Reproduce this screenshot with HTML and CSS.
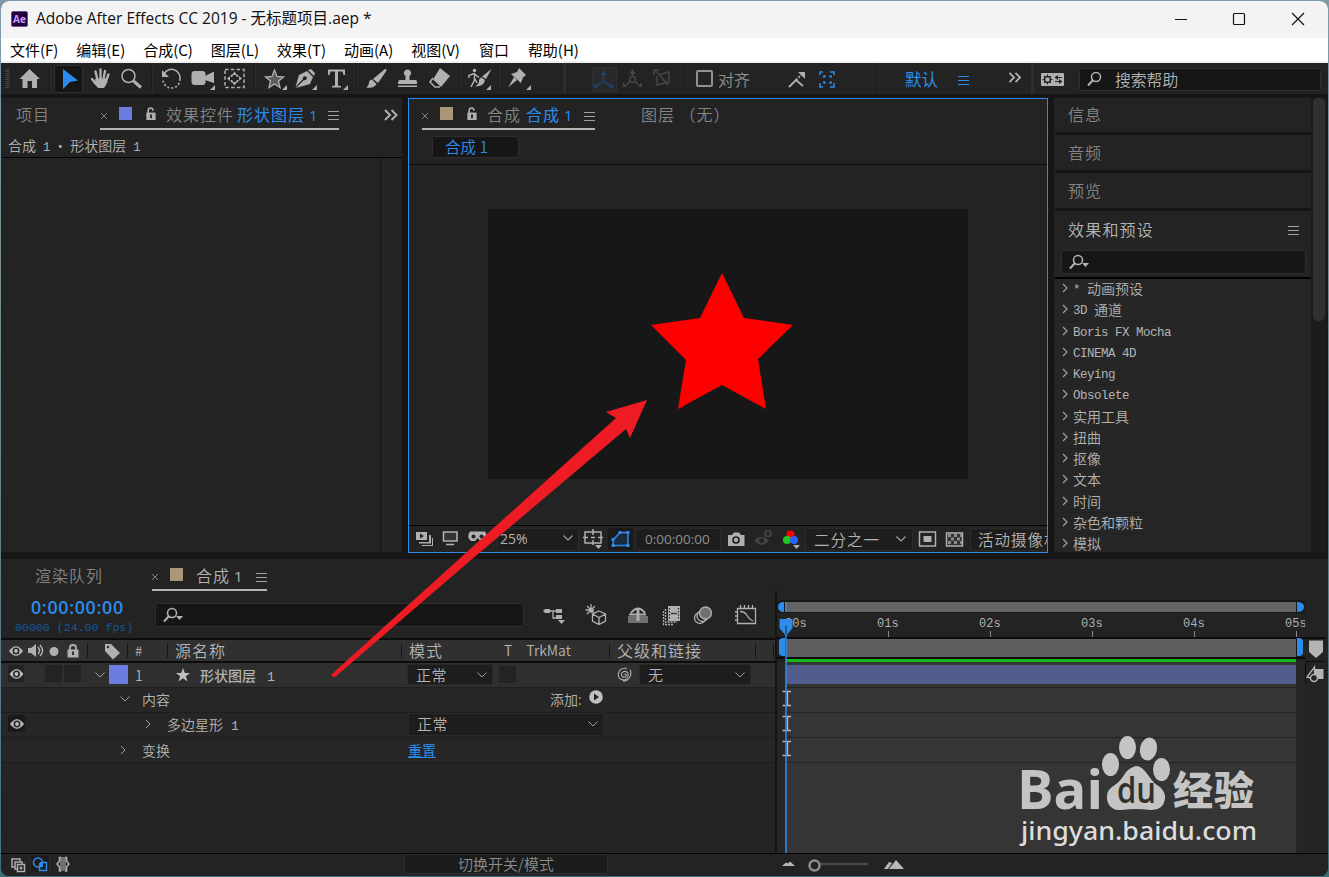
FILE: index.html
```html
<!DOCTYPE html>
<html lang="zh-CN">
<head>
  <meta charset="UTF-8" />
  <title>Adobe After Effects CC 2019</title>
  <link rel="stylesheet" href="styles.css">
</head>
<body>
  <svg class="defs">
    <symbol id="down" viewBox="0 0 12 8"><path d="M1.5 1.5 6 6 10.500 1.500" /></symbol>
    <symbol id="right" viewBox="0 0 8 10"><path d="M2 1 6 5 2 9" /></symbol>
    <symbol id="menu" viewBox="0 0 11 11"><path d="M0 1.500H11M0 5.500H11M0 9.500H11" /></symbol>
    <symbol id="close" viewBox="0 0 8 8"><path d="M1 1 7 7M7 1 1 7" /></symbol>
    <symbol id="more" viewBox="0 0 14 12"><path d="M1 1 6 6 1 11M7.500 1 12.500 6 7.500 11" /></symbol>
    <symbol id="unlock" viewBox="0 0 12 14"><path d="M3 7V3.500Q3 1 5.500 1 8 1 8 3.500V4" fill="none" stroke="#b0b0b0" stroke-width="1.700" /><rect x="1" y="6" width="10" height="8" fill="#b0b0b0" /><path d="M6 8v4" stroke="#232323" stroke-width="2" /></symbol>
    <symbol id="search" viewBox="0 0 22 16"><circle cx="9" cy="6" r="4.500" fill="none" stroke="#b4b4b4" stroke-width="1.500" /><path d="M6 9 1 14.500" stroke="#b4b4b4" stroke-width="2" /></symbol>
    <symbol id="eye" viewBox="0 0 14 10"><path d="M0 5Q7-4.500 14 5 7 14.500 0 5Z" fill="#bebebe" /><circle cx="7" cy="5" r="3.500" fill="#262626" /><circle cx="7" cy="5" r="1.900" fill="#bebebe" /></symbol>
    <symbol id="tri" viewBox="0 0 7 4"><path d="M0 0H7L3.500 4Z" fill="#b4b4b4" /></symbol>
  </svg>

  <div class="window">
    <!-- Title bar -->
    <div class="titlebar">
      <div class="app-icon">Ae</div>
      <div class="title">Adobe After Effects CC 2019 - <span class="zh">无标题项目</span>.aep *</div>
      <svg class="winbtns" width="150" height="37" viewBox="1170 1 150 37" fill="none" stroke="#111" stroke-width="1.200">
        <path d="M1175 19.500H1187" />
        <rect x="1233.500" y="13.500" width="11" height="11" rx="1" />
        <path d="M1292 13 1304 25M1304 13 1292 25" />
      </svg>
    </div>

    <div class="menubar">
      <span>文件(F)</span><span>编辑(E)</span><span>合成(C)</span><span>图层(L)</span><span>效果(T)</span><span>动画(A)</span><span>视图(V)</span><span>窗口</span><span>帮助(H)</span>
    </div>

    <!-- Tools -->
    <div class="toolbar">
      <svg viewBox="1 63 13 31"><path d="M7.500 69V89" stroke="#4a4a4a" stroke-width="4" stroke-dasharray="1 1" /></svg>
      <svg viewBox="14 63 31 31"><path fill="#b0b0b0" d="M29.500 69 40 79H37V88H32V81H27.500V88H22.500V79H19.500Z" /></svg>
      <i class="sep"></i>
      <svg viewBox="54 63 31 31"><rect x="54.500" y="65.500" width="28" height="27" rx="2" fill="#161616" stroke="#2f2f2f" /><path d="M63 69 78 80.500 70 82 63 89Z" fill="#2d8ceb" /></svg>
      <svg viewBox="85 63 31 31" fill="none" stroke="#b0b0b0" stroke-linecap="round"><path stroke-width="2.400" d="M97.500 80 95.500 71.500M100.500 79V69.500M103.500 79 105 71M106 81 108.500 74.500M96 84 92 79" /><path stroke-width="1" fill="#b0b0b0" d="M96 79H106L107 82 104 87.500H98L94.500 83Z" /></svg>
      <svg viewBox="116 63 31 31" fill="none" stroke="#b0b0b0"><circle cx="128.500" cy="76" r="6.500" stroke-width="1.500" /><path stroke-width="3" d="M133.500 81 141 87.500" /></svg>
      <i class="sep"></i>
      <svg viewBox="156 63 31 31" fill="none" stroke="#b0b0b0"><path stroke-width="1.500" d="M164 74A8.500 8.500 0 0 1 180 79" /><path stroke-width="1.600" stroke-dasharray="2 2" d="M180 79A8.500 8.500 0 0 1 163 80" /><path d="M162 70V77H169Z" fill="#b0b0b0" stroke="none" /></svg>
      <svg viewBox="187 63 31 31" fill="#b0b0b0"><rect x="191.500" y="71" width="14" height="14" rx="3" /><path d="M205 76 214 71.500V83L205 80ZM215 85V90H210Z" /></svg>
      <svg viewBox="218 63 32 31" fill="none" stroke="#b0b0b0" stroke-width="1.500"><rect x="225" y="69.500" width="19" height="18" stroke-dasharray="3.500 2.300" /><path fill="#b0b0b0" stroke="none" d="M234.500 71.500 237 75H232ZM234.500 85.500 237 82H232ZM227 78.500 230 76V81ZM242 78.500 239 76V81Z" /><path d="M231.500 77V75.500H233M236 75.500H237.500V77M237.500 80V81.500H236M233 81.500H231.500V80" /></svg>
      <i class="sep"></i>
      <svg viewBox="259 63 31 31"><path d="M274.500 70 277 76.500 283.500 77 278.500 81 280 87.500 274.500 84 269 87.500 270.500 81 265.500 77 272 76.500Z" fill="#5d5d5d" stroke="#b0b0b0" stroke-width="1.300" /><path fill="#b0b0b0" d="M287 85V90H282Z" /></svg>
      <svg viewBox="290 63 31 31" fill="#b0b0b0"><path d="M308 70 311 69 315 73 314 76ZM307 71 313 77 310 84 296 88 304 80A2 2 0 1 0 303 79L295.500 87 299 75ZM317 85V90H312Z" /></svg>
      <svg viewBox="321 63 31 31" fill="#b0b0b0"><path d="M328 69.500H345V75H343.500L342.500 71.500H338V85.500L341 86V87.500H332V86L335 85.500V71.500H330.500L329.500 75H328ZM348 85V90H343Z" /></svg>
      <i class="sep"></i>
      <svg viewBox="361 63 31 31" fill="#b0b0b0"><path d="M385 69Q388 69 385 73L378 83 373 79ZM372 79.500 376.500 84Q373 89 366.500 87.500 369 85 369 83 369 80 372 79.500Z" /></svg>
      <svg viewBox="392 63 31 31" fill="#b0b0b0"><path d="M405.500 76A3.600 3.600 0 1 1 409.500 76V80H416Q417 80 417 84H398Q398 80 400 80H405.500ZM398 85.500H417V87H398Z" /></svg>
      <svg viewBox="423 63 32 31"><path d="M440 68 450 76 441 87 433 79.500Z" fill="#b0b0b0" /><path d="M433 78 430 82 435 87H440" fill="none" stroke="#b0b0b0" stroke-width="1.500" /></svg>
      <i class="sep"></i>
      <svg viewBox="464 63 31 31" fill="none" stroke="#b0b0b0" stroke-width="1.500"><circle cx="474.500" cy="70.500" r="1.800" fill="#b0b0b0" stroke="none" /><path d="M469 78V75.500L474 73.500 479 77.500M474.500 73V80L471 87M475 79 477 83" /><path d="M491.500 69 486 79 482 76.500ZM481.500 77.500 485 80Q484 86.500 475 86.500 479 84 479 81T481.500 77.500ZM491 85V90H486Z" fill="#b0b0b0" stroke="none" /></svg>
      <i class="sep"></i>
      <svg viewBox="502 63 32 31" fill="#b0b0b0"><path d="M519 68 526 75 523 77.500 521 83 511 74 517 72ZM514 77 517 80 508.500 87ZM531 85V90H526Z" /></svg>
      <i class="sep thick"></i>
      <svg viewBox="592 63 26 31"><rect x="592.500" y="67.500" width="24" height="24" fill="#292929" stroke="#303030" /><path stroke="#1f4268" fill="none" stroke-width="1.600" d="M603.500 73V81L596 86M603.500 81 611 86" /><path fill="#1f4268" d="M603.500 70 606.500 75H600.500ZM594 88V83L598 88ZM613 88V83L609 88Z" /></svg>
      <svg viewBox="618 63 30 31" fill="none" stroke="#464646" stroke-width="1.500"><circle cx="632.500" cy="79.500" r="3" /><path d="M632.500 76V72M630 81.500 626 85M635 81.500 639 85" /><path stroke="none" fill="#464646" d="M632.500 69 635.500 74H629.500ZM623 87V82L627 87ZM642 87V82L638 87Z" /></svg>
      <svg viewBox="648 63 29 31" fill="none" stroke="#464646" stroke-width="1.500"><path d="M657 76V85L669 82V72L660 74.500M655 70 668 85M654 75V70H659" /></svg>
      <i class="sep"></i>
      <div class="snap"><span class="checkbox"></span>对齐</div>
      <svg viewBox="781 63 31 31" fill="none" stroke="#b0b0b0" stroke-width="1.800"><path d="M789 87 796 80 803 86" /><path stroke-dasharray="2 1.500" d="M796 80 802 74" /><path fill="#b0b0b0" stroke="none" d="M798 72H805V79Z" /></svg>
      <svg viewBox="812 63 30 31" fill="none" stroke="#2d8ceb" stroke-width="1.500"><path d="M820 75V72H823M830 72H834V75M834 83V87H830M823 87H820V83M824 78V76H826M829 76H831V78M831 81V83H829M826 83H824V81" /></svg>
      <i class="sep late"></i>
      <div class="workspace">默认</div>
      <svg class="ws-menu"><use href="#menu" /></svg>
      <svg class="ws-more"><use href="#more" /></svg>
      <i class="sep thick"></i>
      <svg viewBox="1038 63 29 31"><rect x="1041" y="73" width="23" height="13" rx="1" fill="#b0b0b0" /><circle cx="1047.500" cy="79.500" r="3" fill="none" stroke="#232323" stroke-width="1.500" /><path d="M1047.500 74.500V84.500M1042.500 79.500H1052.500M1044 76 1051 83M1051 76 1044 83" stroke="#232323" /><circle cx="1047.500" cy="79.500" r="2" fill="#b0b0b0" /><path d="M1055 77.500H1062M1055 81.500H1062" stroke="#232323" /><path d="M1058 75V80L1054.500 77.500ZM1059 79V84L1062.500 81.500Z" fill="#232323" /></svg>
      <div class="help-search"><svg class="ico-search"><use href="#search" /></svg>搜索帮助</div>
    </div>

    <div class="upper">
      <!-- Effect controls -->
      <div class="panel controls">
        <div class="tabs">
          <div class="tab idle">项目</div>
          <div class="tab active">
            <svg class="x"><use href="#close" /></svg>
            <span class="swatch layer"></span>
            <svg class="lock"><use href="#unlock" /></svg>
            <span class="label">效果控件</span><span class="label blue">形状图层<b>1</b></span>
            <svg class="menu"><use href="#menu" /></svg>
          </div>
          <svg class="more"><use href="#more" /></svg>
        </div>
        <div class="crumb">合成<i>1</i><span class="dot">・</span>形状图层<i>1</i></div>
        <div class="controls-body"></div>
      </div>

      <!-- Composition viewer -->
      <div class="panel viewer">
        <div class="tabs">
          <div class="tab active">
            <svg class="x"><use href="#close" /></svg>
            <span class="swatch comp"></span>
            <svg class="lock"><use href="#unlock" /></svg>
            <span class="label">合成</span><span class="label blue">合成<b>1</b></span>
            <svg class="menu"><use href="#menu" /></svg>
          </div>
          <div class="tab layer-tab">图层 （无）</div>
        </div>
        <div class="flow"><span class="chip">合成 1</span></div>
        <div class="stage">
          <svg class="canvas" width="480" height="270" viewBox="488 209 480 270">
            <path d="M722 273 744 318 793 325 758 359 766 409 722 385 678 409 686 360 651 325 700 318Z" fill="#f00" />
          </svg>
        </div>
        <div class="viewer-bar">
          <svg width="88" height="26" viewBox="409 526 88 26">
            <g fill="#b0b0b0"><path d="M416 532H427V540H416Z" /><path d="M429 535V542H419V543.500H431V535ZM432 538V545H422V546H433V538Z" /></g>
            <path d="M420 533.500 424 536 420 538.500Z" fill="#232323" />
            <path d="M443.500 532H457V541H443.500ZM446 544.500H454" fill="#333" stroke="#b0b0b0" stroke-width="1.600" />
            <path d="M470 531.500H485Q488 536 485 541H480.500L477.500 538 475 541H471Q466 537 470 531.500Z" fill="#b0b0b0" />
            <circle cx="473.500" cy="536.500" r="2" fill="#232323" /><circle cx="481.500" cy="536.500" r="2" fill="#232323" />
          </svg>
          <div class="drop zoom">25%<svg class="dn"><use href="#down" /></svg></div>
          <svg width="28" height="26" viewBox="579 526 28 26" fill="none" stroke="#b0b0b0" stroke-width="1.500"><rect x="585" y="532" width="16" height="11" /><path d="M593 529V535M593 540V545M583 537.500H588M598 537.500H603M591 537.500H595" /><path d="M595 545H602L598.500 549Z" fill="#b0b0b0" stroke="none" /></svg>
          <svg width="28" height="26" viewBox="607 526 28 26"><rect x="608" y="528" width="25" height="22" rx="2" fill="#1a1a1a" /><path d="M613 545.500V540L620 532.500H628V545.500Z" stroke="#2d8ceb" stroke-width="1.500" fill="#1c2c3c" /><path d="M611.500 544h3v3h-3zM611.500 538h3v3h-3zM618.500 531h3v3h-3zM626.500 531h3v3h-3zM626.500 544h3v3h-3z" fill="#2d8ceb" /></svg>
          <div class="drop time">0:00:00:00</div>
          <svg width="83" height="26" viewBox="722 526 83 26">
            <path d="M728 535H732L734 532.500H739L741 535H744.500V546H728Z" fill="#b0b0b0" /><circle cx="736" cy="540" r="3" fill="none" stroke="#232323" stroke-width="1.700" />
            <path d="M754.500 540.500Q761.500 533 769 540.500 761.500 549 754.500 540.500Z" fill="#454545" /><circle cx="761.500" cy="540.500" r="2.500" fill="#232323" /><circle cx="768" cy="533.500" r="3" fill="none" stroke="#454545" stroke-width="1.700" />
            <circle cx="790.500" cy="534.500" r="4" fill="#f00" /><circle cx="787" cy="540" r="4" fill="#1ec81e" /><circle cx="794" cy="540" r="4" fill="#2a62ff" /><path d="M793 545H800L796.500 549Z" fill="#b0b0b0" />
          </svg>
          <div class="drop res">二分之一<svg class="dn"><use href="#down" /></svg></div>
          <svg width="57" height="26" viewBox="913 526 57 26">
            <rect x="919.500" y="532" width="16" height="14" fill="none" stroke="#b0b0b0" stroke-width="1.500" /><rect x="923.500" y="536" width="8" height="6" fill="#b0b0b0" />
            <rect x="946.500" y="533" width="16" height="13" fill="#333" stroke="#b0b0b0" stroke-width="1.500" /><path d="M948 535.500H962M951 539H962M948 542.500H962" stroke="#8c8c8c" stroke-width="3" stroke-dasharray="3 3" />
          </svg>
          <div class="drop cam">活动摄像机</div>
        </div>
      </div>

      <!-- Right stack -->
      <div class="panel stack">
        <div class="stack-main">
          <div class="closed">信息</div>
          <div class="closed">音频</div>
          <div class="closed">预览</div>
          <div class="presets-head">效果和预设<svg class="menu"><use href="#menu" /></svg></div>
          <div class="presets-search"><svg class="ico-search"><use href="#search" /></svg><svg class="tri"><use href="#tri" /></svg></div>
          <ul class="presets">
            <li><svg><use href="#right" /></svg><span>* </span>动画预设</li>
            <li><svg><use href="#right" /></svg><span>3D </span>通道</li>
            <li><svg><use href="#right" /></svg><span>Boris FX Mocha</span></li>
            <li><svg><use href="#right" /></svg><span>CINEMA 4D</span></li>
            <li><svg><use href="#right" /></svg><span>Keying</span></li>
            <li><svg><use href="#right" /></svg><span>Obsolete</span></li>
            <li><svg><use href="#right" /></svg>实用工具</li>
            <li><svg><use href="#right" /></svg>扭曲</li>
            <li><svg><use href="#right" /></svg>抠像</li>
            <li><svg><use href="#right" /></svg>文本</li>
            <li><svg><use href="#right" /></svg>时间</li>
            <li><svg><use href="#right" /></svg>杂色和颗粒</li>
            <li><svg><use href="#right" /></svg>模拟</li>
          </ul>
        </div>
        <div class="scroll"><div class="thumb"></div></div>
      </div>
    </div>

    <!-- Timeline -->
    <div class="timeline">
      <div class="tabs">
        <div class="tab queue">渲染队列</div>
        <div class="tab active">
          <svg class="x"><use href="#close" /></svg>
          <span class="swatch comp"></span>
          <span class="label">合成<b>1</b></span>
          <svg class="menu"><use href="#menu" /></svg>
        </div>
      </div>

      <div class="tl-body">
        <div class="layers">
          <div class="tl-tools">
            <div class="clock">
              <div class="timecode">0:00:00:00</div>
              <div class="fps">00000 (24.00 fps)</div>
            </div>
            <div class="tl-search"><svg class="ico-search"><use href="#search" /></svg><svg class="tri"><use href="#tri" /></svg></div>
            <svg width="240" height="47" viewBox="530 591 240 47" fill="none" stroke="#b0b0b0" stroke-width="1.300">
              <path d="M546 611H562M553 611V618H559" /><path fill="#b0b0b0" stroke="none" d="M543 611 545 609H550V613H545ZM556 609h6v4h-6zM556 615h6v4h-6zM558 620h7l-3.500 4z" />
              <path d="M599 611 605.500 614V621L599 624.500 592.500 621V614ZM592.500 614 599 617.500 605.500 614M599 617.500V625M591 604V613M585.500 610H594M587 606 594 613M595 606 587 614" /><circle cx="591" cy="610" r="2.200" fill="#b0b0b0" stroke="none" />
              <path fill="#707070" stroke="none" d="M628 616h20v7h-20z" /><path d="M629 614.500H646M631 613Q638 604 645 613" stroke-width="2" /><path d="M638 609V621" stroke-width="3" />
              <path d="M663.500 611V624.500H674M665.500 609V622H677" stroke-dasharray="2 1" /><rect x="668" y="606" width="12" height="15" fill="#b0b0b0" stroke="none" /><path d="M669.500 608V620M678.500 608V620" stroke="#333" stroke-dasharray="1.500 1.500" /><path stroke="#333" d="M671 613.500H677" />
              <circle cx="700" cy="618" r="5.500" /><circle cx="702.500" cy="616" r="5.500" /><circle cx="705.500" cy="613" r="6" fill="#707070" />
              <path d="M737.500 608.500H755.500V623.500H737.500ZM740 611.500Q745 611.500 747 615.500T753 621M740.500 608V605M744.500 608V605M748.500 608V605M752.500 608V605M737 612H735M737 616H735M737 620H735" />
            </svg>
          </div>
          <div class="cols">
            <svg width="127" height="22" viewBox="1 640 127 22"><use href="#eye" x="9" y="646" width="14" height="10" /><path d="M28 648H31L36 644V657L31 653H28Z" fill="#b0b0b0" /><path d="M38 647Q41 651 38 654M40 645Q45 651 40 656" stroke="#b0b0b0" stroke-width="1.400" fill="none" /><circle cx="54" cy="651.500" r="4.500" fill="#b0b0b0" /><path d="M70 651V647.500Q70 645 73 645T76 647.500V651" stroke="#b0b0b0" stroke-width="1.800" fill="none" /><rect x="67.500" y="649.500" width="11" height="8" fill="#b0b0b0" /><path d="M73 651.500V655" stroke="#333" stroke-width="2" /><path d="M105 644H111L120 653 113 659.500 105 651Z" fill="#b0b0b0" /><circle cx="108" cy="647" r="1.300" fill="#333" /><path d="M87.500 644V658M127.500 644V658" stroke="#151515" /></svg>
            <div class="c-num">#</div>
            <div class="c-name">源名称</div>
            <div class="c-mode">模式<span class="c-t">T</span><span>TrkMat</span></div>
            <div class="c-parent">父级和链接</div>
            <div class="c-end"></div>
          </div>
          <div class="row selected">
            <svg class="switches" viewBox="1 663 86 24"><path fill="#232323" d="M8 665h16v17H8zM45 665h17v17H45zM64 665h17v17H64z" /><use href="#eye" x="9.500" y="669" width="14" height="10" /></svg>
            <svg class="dn twirl"><use href="#down" /></svg>
            <span class="color"></span>
            <span class="index">1</span>
            <svg class="star" viewBox="0 0 14 14"><path d="M7 0 8.800 5H14L9.800 8.200 11.500 13.500 7 10.300 2.500 13.500 4.200 8.200 0 5H5.200Z" fill="#c0c0c0" /></svg>
            <div class="name">形状图层<i>1</i></div>
            <div class="select mode">正常<svg class="dn"><use href="#down" /></svg></div>
            <span class="slot"></span>
            <svg class="whip" viewBox="0 0 16 16"><path d="M8.500 8Q10.500 6.500 10.500 9 9.500 11.500 6.500 10.500 4.500 8.500 6 6 9 3.500 12 6 13.500 10 10.500 13 6 15 2.800 11.500 .5 7 4 3 7 .8 11 1.500M14.500 3Q16.500 8 13.500 12 11 15.500 7 15" fill="none" stroke="#b0b0b0" stroke-width="1.200" /></svg>
            <div class="select parent">无<svg class="dn"><use href="#down" /></svg></div>
          </div>
          <div class="row content">
            <svg class="dn"><use href="#down" /></svg>
            <div class="prop">内容</div>
            <div class="add">添加:</div>
            <svg class="play" viewBox="0 0 14 14"><circle cx="7" cy="7" r="6.800" fill="#c0c0c0" /><path d="M5 3.500 10 7 5 10.500Z" fill="#232323" /></svg>
          </div>
          <div class="row shape">
            <svg class="switches" viewBox="1 713 86 24"><path fill="#1a1a1a" d="M8 716h17v17H8z" /><use href="#eye" x="10" y="720" width="14" height="10" /></svg>
            <svg class="rt"><use href="#right" /></svg>
            <div class="prop">多边星形<i>1</i></div>
            <div class="select blend">正常<svg class="dn"><use href="#down" /></svg></div>
          </div>
          <div class="row transform">
            <svg class="rt"><use href="#right" /></svg>
            <div class="prop">变换</div>
            <a class="reset">重置</a>
          </div>
        </div>

        <div class="tracks">
          <svg class="ruler" width="528" height="71" viewBox="777 591 528 71">
            <path d="M777 613V606Q777 600 783 600H1299Q1305 600 1305 606V613Z" fill="#191919" />
            <rect x="786" y="602" width="510" height="10" fill="#646464" />
            <path d="M784 602Q778 602 778 607T784 612ZM1297 602Q1304 602 1304 607T1297 612ZM785 602h1.500v10h-1.500z" fill="#2d8ceb" />
            <path d="M888.500 631V638M990.500 631V638M1092.500 631V638M1194.500 631V638M1296.500 631V638" stroke="#8a8a8a" />
            <g class="secs"><text x="785">00s</text><text x="877">01s</text><text x="979">02s</text><text x="1081">03s</text><text x="1183">04s</text><text x="1285">05s</text></g>
            <path d="M777 637H1305V639H777Z" fill="#0c0c0c" />
            <rect x="779" y="639" width="524" height="18" fill="#191919" />
            <rect x="786" y="639" width="510" height="18" fill="#5f5f5f" />
            <path d="M785 638H783Q779 638 779 642V653Q779 656 783 656H785ZM1297 638H1299Q1303 638 1303 642V653Q1303 656 1299 656H1297Z" fill="#2d8ceb" />
            <path d="M777 657H1305V659H777Z" fill="#0c0c0c" />
            <rect x="786" y="659" width="510" height="3" fill="#10b81c" />
          </svg>
          <div class="track top"><div class="bar"></div></div>
          <div class="track"></div>
          <div class="track"></div>
          <div class="track"></div>
          <div class="track rest"></div>
          <svg class="playhead" width="24" height="262" viewBox="775 591 24 262">
            <path d="M779.500 619H792.500V628L786 636 779.500 628Z" fill="#2d8ceb" /><path d="M786 626V637" stroke="#1a3c60" stroke-width="1.300" />
            <path d="M782.500 691.500H791M782.500 705.500H791M782.500 716.500H791M782.500 730.500H791M782.500 741.500H791M782.500 755.500H791M787.500 692V705M787.500 717V730M787.500 742V755" stroke="#b8b8b8" stroke-width="1.300" />
            <path d="M786 634V853" stroke="#2d8ceb" stroke-width="1.500" />
          </svg>
        </div>

        <svg class="side" width="23" height="262" viewBox="1305 591 23 262">
          <path d="M1305 637H1326V639H1305ZM1305 661H1326V662H1305ZM1305 663h1v21h-1z" fill="#0c0c0c" />
          <path d="M1309 640.500H1323V652L1316 658 1309 652Z" fill="#b4b4b4" />
          <path d="M1312 669h11.500v10h-11.500z" fill="#b4b4b4" /><path d="M1307 677 1314.500 667V679Z" fill="#232323" stroke="#b4b4b4" stroke-width="1.300" /><circle cx="1314" cy="678" r="3.500" fill="#232323" stroke="#b4b4b4" stroke-width="1.500" />
        </svg>
      </div>

      <div class="tl-foot">
        <svg width="80" height="22" viewBox="1 854 80 22" fill="none" stroke="#b0b0b0" stroke-width="1.500">
          <rect x="30.500" y="855" width="19" height="18" rx="1" fill="#1c1c1c" stroke="#2c2c2c" stroke-width="1" />
          <path d="M14 867H12V859H20V861M17 869H15V862H22V864" /><rect x="17.500" y="864.500" width="7" height="7" /><path d="M21 866.500V869.500M19.500 868H22.500" />
          <circle cx="38" cy="862.500" r="4.500" stroke="#2d8ceb" /><path d="M40 862.500H46.500V870.500H39.500V866" stroke="#2d8ceb" /><path d="M39 863h4v4h-4z" fill="#2d8ceb" stroke="none" />
          <path d="M60 857H66V871H60Z" fill="#707070" stroke="none" /><path d="M61 857.500H59.500V861L57 864 59.500 867V871H61M65 857.500H66.500V861L69 864 66.500 867V871H65" />
        </svg>
        <div class="toggle">切换开关/模式</div>
        <svg class="zoomer" width="130" height="22" viewBox="780 854 130 22"><path d="M783 866 787 862.500 789 863.500 791 861.500 796 866ZM885 869 890 862 893 863 889 869ZM890 869 897 860 905 869Z" fill="#b8b8b8" /><path d="M820 864H869" stroke="#484848" stroke-width="2.500" /><circle cx="815.500" cy="865.500" r="5" fill="#232323" stroke="#8c8c8c" stroke-width="2.500" /></svg>
      </div>
    </div>
  </div>

  <!-- Annotation arrow and watermark lie over the window -->
  <svg class="overlay" width="1329" height="877" viewBox="0 0 1329 877">
    <path d="M647 400 606 412 616 418 458 560 332 674Q331 677 335 677L471 560 626 429 630 438Z" fill="#ed1c24" />
    <g fill="#c4c4c4">
      <ellipse cx="1110.500" cy="764.500" rx="8.500" ry="11.500" />
      <ellipse cx="1127.500" cy="747.500" rx="8.500" ry="11.500" />
      <ellipse cx="1148.500" cy="749" rx="8.500" ry="11.500" transform="rotate(12 1148.500 749)" />
      <ellipse cx="1161.500" cy="769.500" rx="8.500" ry="11.500" />
      <path d="M1136 766Q1142 766 1148 775T1160 787Q1166 793 1165 799 1163 811 1150 810 1136 808 1122 810 1109 811 1107 799 1106 791 1112 787 1120 782 1124 775T1136 766Z" />
      <text class="wm-bai" x="1017" y="809" textLength="86" lengthAdjust="spacingAndGlyphs">Bai</text>
      <text class="wm-du" x="1117" y="803" textLength="39" lengthAdjust="spacingAndGlyphs">du</text>
      <text class="wm-jy" x="1173" y="805" textLength="81">经验</text>
      <text class="wm-url" x="1021" y="840" textLength="236" lengthAdjust="spacingAndGlyphs">jingyan.baidu.com</text>
    </g>
  </svg>
</body>
</html>
```

FILE: styles.css
```css
* {
  box-sizing: border-box;
}

body {
  margin: 0;
  padding: 1px;
  width: 1329px;
  height: 877px;
  overflow: hidden;
  background: linear-gradient(#7c9cab, #7c8e94 30%, #44747c 97%, #3a7078);
  font-family: "Noto Sans CJK SC", sans-serif;
  font-weight: 350;
  color: #b4b4b4;
}

svg {
  display: block;
  flex: none;
}

i {
  font-style: normal;
}

.defs {
  display: none;
}

.window {
  width: 1327px;
  height: 875px;
  border-radius: 8px;
  overflow: hidden;
  background: #161616;
}

/* Title + menu */
.titlebar {
  display: flex;
  align-items: center;
  height: 37px;
  padding-left: 10px;
  background: #f3f3f3;
  color: #111;
}

.app-icon {
  width: 17px;
  height: 16px;
  margin-bottom: 2px;
  border: 1px solid #6f4f9c;
  border-radius: 2px;
  background: #22003c;
  color: #c59cff;
  font: bold 10px/14px "Open Sans", sans-serif;
  text-align: center;
}

.title {
  margin: 0 auto 4px 8px;
  font: 15.5px "Open Sans", sans-serif;
}

.title .zh {
  font-family: "Noto Sans CJK SC", sans-serif;
  font-size: 15.5px;
}

.winbtns {
  margin-right: 8px;
}

.menubar {
  display: flex;
  gap: 18px;
  height: 25px;
  padding-left: 9px;
  border-bottom: 2px solid #f0f0f0;
  background: #fff;
  color: #000;
  font-size: 15px;
  font-weight: 400;
  line-height: 23px;
  letter-spacing: -0.02px;
}

.menubar span:nth-child(n+8) {
  padding-left: 1px;
}

/* Toolbar */
.toolbar {
  display: grid;
  grid-template-columns:
    13px 31px 9px 31px 31px 31px 9px 31px 31px 32px 9px 31px 31px 31px
    9px 31px 31px 32px 9px 31px 7px 32px 58px 26px 30px 29px 18px 86px
    31px 30px 63px 43px 30px 46px 14px 29px 242px;
  align-items: center;
  height: 31px;
  background: #232323;
}

.toolbar > svg {
  width: 100%;
  height: 31px;
}

.sep {
  width: 2px;
  height: 26px;
  justify-self: center;
  background: #1b1b1b;
  border-right: 1px solid #2d2d2d;
}

.sep.thick {
  width: 3px;
  height: 31px;
  margin-left: 3px;
  background: #2e2e2e;
}

.sep.late {
  height: 31px;
  margin-left: 8px;
}

.snap {
  display: flex;
  align-items: center;
  gap: 5px;
  padding-left: 1px;
  font-size: 16px;
  line-height: 30px;
  color: #909090;
}

.checkbox {
  width: 17px;
  height: 17px;
  border: 2px solid #909090;
  border-radius: 2px;
}

.workspace {
  color: #2d8ceb;
  font-size: 16.5px;
  font-weight: 400;
  line-height: 30px;
}

.toolbar > .ws-menu {
  width: 11px;
  height: 11px;
  margin: 4px 0 0 10px;
  stroke: #2d8ceb;
}

.toolbar > .ws-more {
  width: 14px;
  height: 11px;
  margin: 0 0 3px 30px;
}

.ws-more,
.more {
  fill: none;
  stroke: #b0b0b0;
  stroke-width: 2;
}

.toolbar > .help-search {
  display: flex;
  align-items: center;
  height: 23px;
  margin: 1px 0 0 12px;
  padding-left: 7px;
  width: 242px;
  border: 1px solid #303030;
  border-radius: 3px;
  background: #161616;
  font-size: 15.8px;
  line-height: 21px;
}

.help-search .ico-search {
  margin-right: 6px;
}

.ico-search {
  width: 22px;
  height: 16px;
}

.tri {
  width: 7px;
  height: 4px;
  margin: 5px 0 0 -9px;
}

/* Panels */
.upper {
  display: grid;
  grid-template-columns: 401px 640px 273px;
  column-gap: 6px;
  height: 465px;
  padding-top: 4px;
  padding-bottom: 7px;
}

.panel {
  background: #232323;
  overflow: hidden;
  height: 454px;
}

.tabs {
  display: flex;
  height: 32px;
  font-size: 16px;
  letter-spacing: 1px;
  line-height: 30px;
  color: #858585;
}

.tab {
  display: flex;
  align-items: center;
  height: 32px;
  white-space: nowrap;
}

.tab.active {
  border-bottom: 2px solid #b4b4b4;
}

.tab b {
  margin-left: 4px;
  font: 15px "Open Sans", sans-serif;
}

.x {
  width: 8px;
  height: 8px;
  margin-top: 5px;
  stroke: #808080;
}

.swatch {
  width: 13px;
  height: 13px;
  margin-left: 11px;
}

.swatch.layer { background: #6b7de0; }
.swatch.comp { background: #a99777; }

.lock {
  width: 12px;
  height: 13px;
  margin: 0 0 0 13px;
}

.label {
  margin-left: 9px;
}

.blue {
  margin-left: 3px;
  color: #2d8ceb;
  font-weight: 400;
}

.menu {
  width: 11px;
  height: 11px;
  margin: 5px 0 0 auto;
  stroke: #a0a0a0;
}

.controls {
  padding-left: 1px;
}

.controls .tabs .label {
  padding-top: 1px;
}

.idle {
  margin-left: 14px;
}

.controls .tab.active {
  width: 239px;
  margin-left: 50px;
}

.more {
  width: 14px;
  height: 12px;
  margin: 11px 0 0 45px;
}

.crumb {
  height: 28px;
  padding-left: 6px;
  border-bottom: 1px solid #000;
  font-size: 14px;
  line-height: 31px;
}

.crumb i {
  margin-left: 7px;
  font: 12px "Liberation Mono", monospace;
}

.dot {
  margin: 0 3px;
}

.controls-body {
  width: 379px;
  height: 394px;
  border-right: 1px solid #161616;
}

/* Viewer */
.viewer {
  height: 455px;
  border: 1px solid #2d8ceb;
}

.viewer .tabs {
  height: 31px;
  padding-left: 13px;
}

.viewer .tab {
  height: 31px;
}

.viewer .tab.active {
  width: 173px;
}

.viewer .x {
  margin-left: -1px;
}

.viewer .blue {
  margin-left: 5px;
}

.layer-tab {
  margin-left: 46px;
  padding-bottom: 2px;
}

.flow {
  height: 35px;
  padding: 6px 0 0 23px;
  border-bottom: 1px solid #0d0d0d;
}

.chip {
  display: block;
  width: 87px;
  height: 22px;
  padding-left: 12px;
  border: 1px solid #2d2d2d;
  border-radius: 2px;
  background: #161616;
  color: #2d8ceb;
  font-size: 15.5px;
  line-height: 19px;
}

.stage {
  height: 360px;
  padding: 44px 0 0 79px;
}

.canvas {
  background: #171717;
}

.viewer-bar {
  display: flex;
  align-items: center;
  width: 640px;
  height: 27px;
  border-top: 1px solid #000;
}

.drop {
  display: flex;
  align-items: center;
  justify-content: space-between;
  flex: none;
  height: 23px;
  border: 1px solid #2b2b2b;
  border-radius: 2px;
  background: #1d1d1d;
  font-size: 15.5px;
  line-height: 20px;
  letter-spacing: 1px;
  white-space: nowrap;
}

.dn {
  width: 12px;
  height: 8px;
}

.dn,
.rt,
.presets svg {
  fill: none;
  stroke: #a0a0a0;
  stroke-width: 1.2;
}

.zoom {
  width: 82px;
  padding: 0 4px 2px 2px;
  font: 14px "Open Sans", sans-serif;
  letter-spacing: 0;
}

.time {
  width: 86px;
  margin-right: 1px;
  padding: 0 0 1px 9px;
  color: #909090;
  font: 13.5px "Open Sans", sans-serif;
  letter-spacing: 0;
}

.res {
  width: 108px;
  padding: 0 5px 0 8px;
}

.cam {
  width: 110px;
  padding-left: 7px;
}

/* Right column */
.stack {
  display: grid;
  grid-template-columns: 257px 16px;
}

.stack-main {
  padding-left: 1px;
}

.closed {
  height: 38px;
  padding-left: 13px;
  border-bottom: 3px solid #161616;
  font-size: 16px;
  line-height: 35px;
  letter-spacing: 1px;
  color: #858585;
}

.closed:first-child {
  height: 37px;
  line-height: 32px;
}

.presets-head {
  display: flex;
  align-items: center;
  height: 39px;
  padding: 0 12px 3px 13px;
  font-size: 16px;
  letter-spacing: 1.2px;
}

.presets-head .menu {
  margin-top: 2px;
}

.presets-search {
  display: flex;
  align-items: center;
  width: 245px;
  height: 24px;
  margin-left: 6px;
  padding-left: 7px;
  border: 1px solid #2e2e2e;
  border-radius: 3px;
  background: #161616;
}

.presets {
  margin: 3px 0 0;
  padding: 0;
  border-top: 2px solid #000;
  background: #262626;
  list-style: none;
}

.presets li {
  display: flex;
  align-items: center;
  height: 21.25px;
  padding: 0 0 2px 6px;
  border-bottom: 1px solid #212121;
  font-size: 14px;
  line-height: 18px;
  white-space: pre;
}

.presets span {
  margin-top: 4px;
  font: 12.5px/14px "Liberation Mono", monospace;
  letter-spacing: -0.5px;
}

.presets svg {
  width: 8px;
  height: 10px;
  margin-right: 4px;
}

.scroll {
  padding: 0 2px;
  background: #1b1b1b;
}

.thumb {
  height: 223px;
  border-radius: 5px;
  background: #303030;
}

/* Timeline */
.timeline {
  height: 317px;
  background: #232323;
}

.timeline .queue {
  margin-left: 34px;
  padding-bottom: 2px;
}

.timeline .tab {
  padding-top: 1px;
}

.timeline .tab.active {
  width: 115px;
  margin-left: 49px;
  color: #b4b4b4;
}

.timeline .x {
  margin-left: -1px;
}

.timeline .label {
  margin-left: 13px;
}

.tl-body {
  display: grid;
  grid-template-columns: 776px 528px 23px;
  height: 262px;
}

.layers {
  border-right: 2px solid #141414;
}

.tl-tools {
  display: flex;
  height: 47px;
}

.clock {
  width: 154px;
  padding: 4px 0 0 14px;
}

.timecode {
  padding-left: 16px;
  color: #2d8ceb;
  font: 600 17.8px/24px "Open Sans", sans-serif;
  letter-spacing: 0.7px;
}

.fps {
  color: #15569a;
  font: 11.6px/17px "Liberation Mono", monospace;
}

.tl-search {
  display: flex;
  align-items: center;
  width: 369px;
  height: 24px;
  margin: 12px 6px 0 0;
  padding-left: 7px;
  border: 1px solid #2e2e2e;
  border-radius: 3px;
  background: #161616;
}

.cols {
  display: flex;
  align-items: center;
  height: 25px;
  border-top: 2px solid #0c0c0c;
  border-bottom: 2px solid #0c0c0c;
  background: #303030;
  font-size: 16px;
  letter-spacing: 1px;
}

.cols > div {
  flex: none;
  height: 14px;
  line-height: 13px;
  white-space: nowrap;
  border-right: 1px solid #151515;
}

.cols > .c-num {
  width: 40px;
  padding-left: 7px;
  font-size: 13px;
}

.c-name {
  width: 234px;
  padding-left: 7px;
}

.c-mode {
  display: flex;
  width: 208px;
  padding-left: 7px;
}

.c-mode span {
  font-size: 14px;
}

.c-mode .c-t {
  margin: 0 13px 0 61px;
}

.c-parent {
  width: 146px;
  padding-left: 7px;
}

.c-mode span + span {
  letter-spacing: 0;
}

.c-end {
  width: 18px;
}

.row {
  display: flex;
  align-items: center;
  height: 25px;
  padding-bottom: 2px;
  border-bottom: 1px solid #1e1e1e;
  background: #262626;
  font-size: 14px;
  line-height: 22px;
}

.row.selected {
  padding-bottom: 1px;
  background: #2f2f2f;
}

.row i {
  margin-left: 8px;
  font: 13px "Liberation Mono", monospace;
}

.row .dn,
.row .rt {
  stroke-width: 1;
}

.rt {
  width: 8px;
  height: 10px;
}

.switches {
  width: 86px;
  height: 24px;
}

.twirl {
  margin-left: 7px;
}

.color {
  width: 19px;
  height: 19px;
  margin-left: 3px;
  background: #6b7de0;
}

.index {
  width: 8px;
  margin-left: 7px;
}

.star {
  width: 14px;
  height: 14px;
  margin-left: 33px;
}

.name {
  width: 207px;
  margin-left: 10px;
  font-weight: 500;
}

.name i {
  margin-left: 11px;
}

.select {
  display: flex;
  align-items: center;
  justify-content: space-between;
  height: 21px;
  padding: 0 4px 0 8px;
  border: 1px solid #292929;
  background: #1d1d1d;
  font-size: 15px;
  letter-spacing: 0.5px;
}

.mode {
  width: 86px;
}

.slot {
  width: 17px;
  height: 17px;
  margin-left: 6px;
  background: #232323;
}

.whip {
  width: 16px;
  height: 15px;
  margin-left: 100px;
}

.parent {
  width: 112px;
  margin-left: 7px;
}

.content .dn {
  margin-left: 118px;
}

.content .prop {
  width: 408px;
  margin-left: 11px;
}

.add {
  width: 38px;
}

.play {
  width: 14px;
  height: 14px;
  margin: 0 0 5px 1px;
}

.shape .rt {
  margin-left: 57px;
}

.shape .prop {
  width: 241px;
  margin-left: 15px;
}

.blend {
  width: 196px;
  height: 23px;
}

.row.transform {
  padding-bottom: 1px;
}

.transform .rt {
  margin-left: 118px;
}

.transform .prop {
  width: 266px;
  margin-left: 15px;
}

.reset {
  color: #2d8ceb;
  font-weight: 400;
  text-decoration: underline;
}

.tracks {
  position: relative;
  height: 262px;
}

.secs {
  fill: #b0b0b0;
  font: 12px "Liberation Mono", monospace;
  transform: translateY(627px);
}

.track {
  width: 528px;
  height: 25px;
  border-bottom: 1px solid #242424;
  background: linear-gradient(90deg, #262626 8px, #353535 8px, #353535 519px, #262626 519px);
}

.track.top {
  height: 26px;
  padding: 3px 9px;
}

.bar {
  height: 19px;
  background: #535d8b;
}

.track.rest {
  height: 90px;
  border-bottom: 0;
}

.playhead {
  position: absolute;
  left: -2px;
  top: 0;
}

.tl-foot {
  display: flex;
  height: 23px;
  border-top: 1px solid #000;
}

.toggle {
  width: 204px;
  height: 20px;
  margin: 0 171px 0 323px;
  border: 1px solid #2c2c2c;
  border-radius: 2px;
  background: #1c1c1c;
  color: #8c8c8c;
  font-size: 15px;
  line-height: 17px;
  text-align: center;
}

/* Overlay */
.overlay {
  position: absolute;
  left: 0;
  top: 0;
}

.wm-bai {
  font: bold 53px "Open Sans", sans-serif;
}

.wm-du {
  fill: #303030;
  font: 600 36px "Open Sans", sans-serif;
}

.wm-jy {
  font: 900 40px "Noto Sans CJK SC", sans-serif;
}

.wm-url {
  fill: #dcdcdc;
  font: 500 26px "Noto Sans", sans-serif;
}
```
